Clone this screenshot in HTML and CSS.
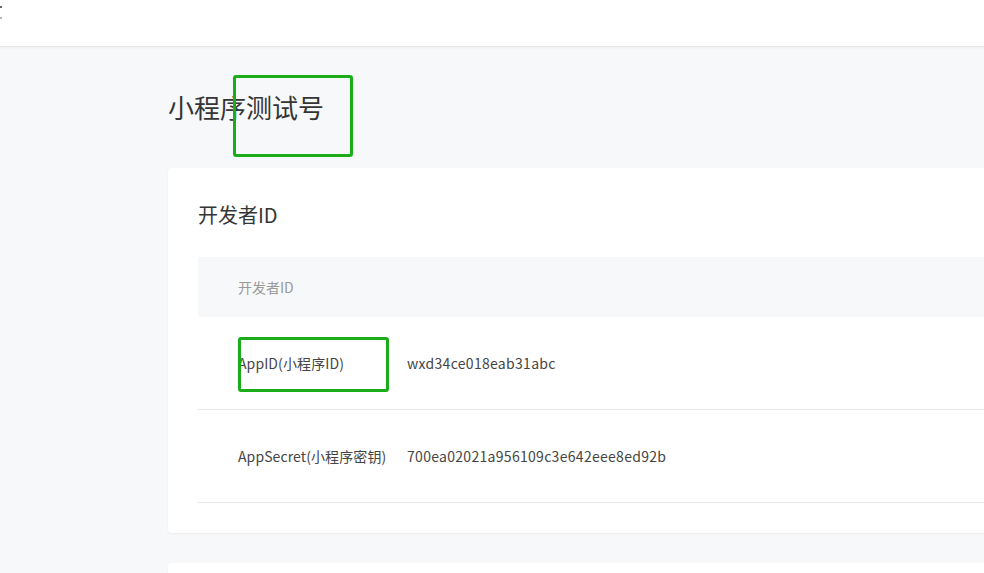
FILE: index.html
```html
<!DOCTYPE html>
<html lang="zh-CN">
<head>
<meta charset="utf-8">
<title>小程序测试号</title>
<link rel="stylesheet" href="styles.css">
</head>
<body>
<header class="topbar">
  <span class="topbar-mark"></span>
</header>
<main class="main">
  <h1 class="page-title">小程序测试号</h1>
  <section class="card">
    <h2 class="card-title">开发者ID</h2>
    <div class="table">
      <div class="table-head">开发者ID</div>
      <div class="table-row">
        <div class="cell-label">AppID(小程序ID)</div>
        <div class="cell-value">wxd34ce018eab31abc</div>
      </div>
      <div class="table-row">
        <div class="cell-label">AppSecret(小程序密钥)</div>
        <div class="cell-value">700ea02021a956109c3e642eee8ed92b</div>
      </div>
    </div>
  </section>
  <section class="card card-next"></section>
</main>
<div class="mark mark-title"></div>
<div class="mark mark-appid"></div>
</body>
</html>
```
FILE: styles.css
```css
html, body {
  margin: 0;
  padding: 0;
}
body {
  background: #f7f8fa;
  font-family: "Noto Sans CJK SC", "Noto Sans", sans-serif;
  color: #353535;
  overflow: hidden;
  width: 984px;
  height: 573px;
  position: relative;
}
.topbar {
  height: 46px;
  background: #fff;
  border-bottom: 1px solid #e6e6e6;
  box-shadow: 0 1px 2px rgba(0,0,0,0.04);
  display: flex;
  align-items: flex-start;
}
.topbar-mark {
  display: block;
  width: 2px;
  height: 9px;
  margin-top: 6px;
  border-top: 2px solid #666;
  border-bottom: 2px solid #b5b5b5;
}
.main {
  padding: 42px 0 0 168px;
  width: 1100px;
}
.page-title {
  margin: 0 0 43px;
  font-size: 26px;
  line-height: 36px;
  font-weight: 400;
  color: #353535;
}
.card {
  background: #fff;
  border-radius: 4px;
  box-shadow: 0 1px 2px rgba(0,0,0,0.05);
  padding: 30px;
}
.card-title {
  margin: 0 0 25px;
  font-size: 20px;
  line-height: 34px;
  font-weight: 400;
  color: #353535;
}
.table-head {
  background: #f7f8fa;
  height: 60px;
  line-height: 60px;
  padding-left: 40px;
  font-size: 14px;
  color: #9a9a9a;
}
.table-row {
  display: grid;
  grid-template-columns: 209px 1fr;
  align-items: center;
  height: 92px;
  border-bottom: 1px solid #e7e7e7;
  font-size: 14px;
  color: #454545;
}
.cell-label {
  padding-left: 40px;
  white-space: nowrap;
  letter-spacing: 0.1px;
}
.cell-value {
  letter-spacing: 0.3px;
}
.card-next {
  margin-top: 30px;
  height: 100px;
}
.mark {
  position: absolute;
  border: 3px solid #1aad19;
  border-radius: 3px;
  box-sizing: border-box;
}
.mark-title {
  left: 233px;
  top: 75px;
  width: 120px;
  height: 82px;
}
.mark-appid {
  left: 238px;
  top: 337px;
  width: 151px;
  height: 55px;
}
```
